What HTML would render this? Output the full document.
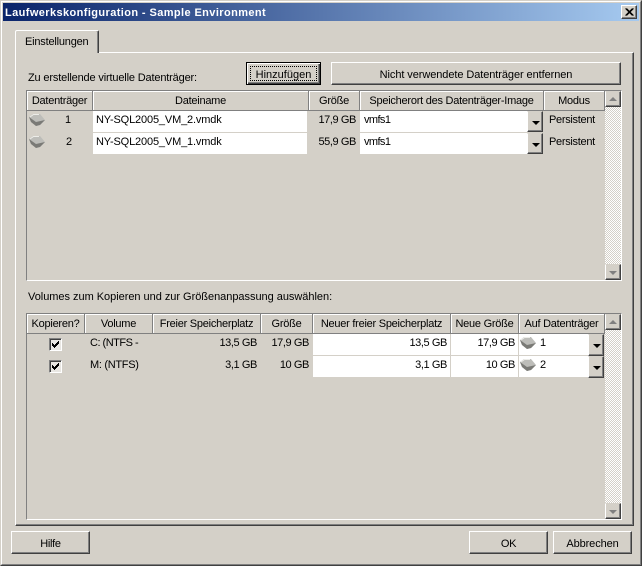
<!DOCTYPE html>
<html><head><meta charset="utf-8"><style>
html,body{margin:0;padding:0}
body{width:642px;height:566px;overflow:hidden;position:relative;background:#d4d0c8;font-family:"Liberation Sans",sans-serif;font-size:11px;color:#000}
div{position:absolute;box-sizing:border-box}
.t{white-space:nowrap;height:14px;line-height:14px;letter-spacing:-.2px;transform:translateY(1px)}
.c{text-align:center}.r{text-align:right}
.n{letter-spacing:-.4px}
.b{background:#d4d0c8;border:1px solid;border-color:#fff #404040 #404040 #fff;box-shadow:inset -1px -1px 0 #808080;text-align:center;white-space:nowrap}
.h{background:#d4d0c8;border-right:1px solid #808080;border-bottom:1px solid #808080;box-shadow:inset 1px 1px 0 #fff;text-align:center;line-height:21px;height:20px;white-space:nowrap;letter-spacing:-.25px}
.w{background:#fff}
.dd{width:16px;background:#d4d0c8;border:1px solid;border-color:#d4d0c8 #404040 #404040 #fff;box-shadow:inset -1px -1px 0 #808080}
.dd:after{content:"";position:absolute;left:4px;top:9px;border:4px solid transparent;border-top:4px solid #000;border-bottom:0}
.sb{width:16px;height:16px;background:#d4d0c8;border:1px solid;border-color:#d4d0c8 #404040 #404040 #fff;box-shadow:inset -1px -1px 0 #808080}
.up:after{content:"";position:absolute;left:3px;top:5px;border:4px solid transparent;border-bottom:4px solid #808080;border-top:0}
.dn:after{content:"";position:absolute;left:3px;top:6px;border:4px solid transparent;border-top:4px solid #808080;border-bottom:0}
.tr{width:16px;background:conic-gradient(#fff 25%,#d4d0c8 0 50%,#fff 0 75%,#d4d0c8 0) 0 0/2px 2px}
.cb{width:13px;height:13px;background:#e8e6e2;border:1px solid;border-color:#808080 #fff #fff #808080;box-shadow:inset 1px 1px 0 #404040}
svg{position:absolute;display:block}
</style></head><body>
<!-- window frame -->
<div style="left:0;top:0;width:642px;height:566px;border:1px solid;border-color:#d4d0c8 #404040 #404040 #d4d0c8"></div>
<div style="left:1px;top:1px;width:640px;height:564px;border:1px solid;border-color:#fff #808080 #808080 #fff"></div>
<!-- title -->
<div style="left:3px;top:3px;width:636px;height:18px;background:linear-gradient(90deg,#0a246a,#a6caf0)"></div>
<div class="t" style="left:5px;top:5px;color:#fff;font-weight:bold;letter-spacing:.4px">Laufwerkskonfiguration - Sample Environment</div>
<div style="left:621px;top:5px;width:16px;height:14px;background:#d4d0c8;border:1px solid;border-color:#fff #404040 #404040 #fff;box-shadow:inset -1px -1px 0 #808080"></div>
<svg style="left:621px;top:5px" width="16" height="14"><path d="M4.5 3.5L11.5 10.5M5.5 3.5L12.5 10.5M11.5 3.5L4.5 10.5M12.5 3.5L5.5 10.5" stroke="#000" stroke-width="1"/></svg>
<!-- panel -->
<div style="left:15px;top:52px;width:619px;height:474px;border:1px solid;border-color:#fff #404040 #404040 #fff;box-shadow:inset -1px -1px 0 #808080"></div>
<!-- tab -->
<div style="left:15px;top:30px;width:84px;height:23px;background:#d4d0c8;border:1px solid;border-color:#fff #404040 #d4d0c8 #fff;border-bottom:0;border-top-left-radius:2px;border-top-right-radius:2px;box-shadow:inset -1px 0 0 #808080"></div>
<div class="t" style="left:25px;top:34px;letter-spacing:-.2px">Einstellungen</div>

<div class="t" style="left:28px;top:70px;letter-spacing:-.16px">Zu erstellende virtuelle Datenträger:</div>
<div class="b" style="left:246px;top:62px;width:75px;height:23px;border:1px solid #000;box-shadow:inset 1px 1px 0 #fff,inset -1px -1px 0 #404040,inset -2px -2px 0 #808080;line-height:24px">Hinzufügen</div>
<div style="left:250px;top:66px;width:67px;height:15px;border:1px dotted #000"></div>
<div class="b" style="left:331px;top:62px;width:290px;height:23px;line-height:24px;letter-spacing:-.08px">Nicht verwendete Datenträger entfernen</div>

<!-- table 1 -->
<div style="left:26px;top:90px;width:596px;height:191px;border:1px solid;border-color:#808080 #fff #fff #808080"></div>
<div class="h" style="left:27px;top:91px;width:66px">Datenträger</div>
<div class="h" style="left:93px;top:91px;width:216px">Dateiname</div>
<div class="h" style="left:309px;top:91px;width:51px">Größe</div>
<div class="h" style="left:360px;top:91px;width:184px">Speicherort des Datenträger-Image</div>
<div class="h" style="left:544px;top:91px;width:61px">Modus</div>
<div class="tr" style="left:605px;top:91px;height:189px"></div>
<div class="sb up" style="left:605px;top:91px"></div>
<div class="sb dn" style="left:605px;top:264px"></div>

<svg style="left:28px;top:113px" width="18" height="14"><path d="M1 4L5 1H12L17 7L12 12L8 13L3 9Z" fill="#bdbdb9"/><path d="M1 4L8 9L17 7L12 12L8 13L3 9Z" fill="#7a7a76"/><path d="M2 4L5.5 1.5H11" fill="none" stroke="#ecece8"/></svg>
<div class="t c" style="left:60px;top:112px;width:16px">1</div>
<div class="w" style="left:93px;top:111px;width:214px;height:21px"></div>
<div class="t" style="left:96px;top:112px;letter-spacing:-.15px">NY-SQL2005_VM_2.vmdk</div>
<div class="t r n" style="left:309px;top:112px;width:47px">17,9 GB</div>
<div class="w" style="left:360px;top:111px;width:167px;height:21px"></div>
<div class="t" style="left:364px;top:112px;letter-spacing:-.6px">vmfs1</div>
<div class="dd" style="left:527px;top:111px;height:21px"></div>
<div class="t" style="left:549px;top:112px;letter-spacing:-.3px">Persistent</div>

<svg style="left:28px;top:135px" width="18" height="14"><path d="M1 4L5 1H12L17 7L12 12L8 13L3 9Z" fill="#bdbdb9"/><path d="M1 4L8 9L17 7L12 12L8 13L3 9Z" fill="#7a7a76"/><path d="M2 4L5.5 1.5H11" fill="none" stroke="#ecece8"/></svg>
<div class="t c" style="left:61px;top:134px;width:16px">2</div>
<div class="w" style="left:93px;top:133px;width:214px;height:21px"></div>
<div class="t" style="left:96px;top:134px;letter-spacing:-.15px">NY-SQL2005_VM_1.vmdk</div>
<div class="t r n" style="left:309px;top:134px;width:47px">55,9 GB</div>
<div class="w" style="left:360px;top:133px;width:167px;height:21px"></div>
<div class="t" style="left:364px;top:134px;letter-spacing:-.6px">vmfs1</div>
<div class="dd" style="left:527px;top:133px;height:21px"></div>
<div class="t" style="left:549px;top:134px;letter-spacing:-.3px">Persistent</div>

<div class="t" style="left:28px;top:289px;letter-spacing:-.03px">Volumes zum Kopieren und zur Größenanpassung auswählen:</div>

<!-- table 2 -->
<div style="left:26px;top:313px;width:596px;height:207px;border:1px solid;border-color:#808080 #fff #fff #808080"></div>
<div class="h" style="left:27px;top:314px;width:58px">Kopieren?</div>
<div class="h" style="left:85px;top:314px;width:68px">Volume</div>
<div class="h" style="left:153px;top:314px;width:108px">Freier Speicherplatz</div>
<div class="h" style="left:261px;top:314px;width:52px">Größe</div>
<div class="h" style="left:313px;top:314px;width:138px">Neuer freier Speicherplatz</div>
<div class="h" style="left:451px;top:314px;width:68px">Neue Größe</div>
<div class="h" style="left:519px;top:314px;width:86px">Auf Datenträger</div>
<div class="tr" style="left:605px;top:314px;height:205px"></div>
<div class="sb up" style="left:605px;top:314px"></div>
<div class="sb dn" style="left:605px;top:503px"></div>

<div class="cb" style="left:49px;top:338px"></div>
<svg style="left:49px;top:338px" width="13" height="13" shape-rendering="crispEdges"><path d="M3 5h1v3H3zM4 6h1v3H4zM5 7h1v3H5zM6 6h1v3H6zM7 5h1v3H7zM8 4h1v3H8zM9 3h1v3H9z" fill="#000"/></svg>
<div class="t" style="left:90px;top:335px;letter-spacing:-.5px">C: (NTFS -</div>
<div class="t r n" style="left:153px;top:335px;width:104px">13,5 GB</div>
<div class="t r n" style="left:261px;top:335px;width:48px">17,9 GB</div>
<div class="w" style="left:313px;top:334px;width:137px;height:21px"></div>
<div class="t r n" style="left:313px;top:335px;width:134px">13,5 GB</div>
<div class="w" style="left:451px;top:334px;width:67px;height:21px"></div>
<div class="t r n" style="left:451px;top:335px;width:64px">17,9 GB</div>
<div class="w" style="left:519px;top:334px;width:69px;height:21px"></div>
<svg style="left:519px;top:336px" width="18" height="14"><path d="M1 4L5 1H12L17 7L12 12L8 13L3 9Z" fill="#bdbdb9"/><path d="M1 4L8 9L17 7L12 12L8 13L3 9Z" fill="#7a7a76"/><path d="M2 4L5.5 1.5H11" fill="none" stroke="#ecece8"/></svg>
<div class="t" style="left:540px;top:335px">1</div>
<div class="dd" style="left:588px;top:334px;height:22px"></div>

<div class="cb" style="left:49px;top:360px"></div>
<svg style="left:49px;top:360px" width="13" height="13" shape-rendering="crispEdges"><path d="M3 5h1v3H3zM4 6h1v3H4zM5 7h1v3H5zM6 6h1v3H6zM7 5h1v3H7zM8 4h1v3H8zM9 3h1v3H9z" fill="#000"/></svg>
<div class="t" style="left:90px;top:357px;letter-spacing:-.3px">M: (NTFS)</div>
<div class="t r n" style="left:153px;top:357px;width:104px">3,1 GB</div>
<div class="t r n" style="left:261px;top:357px;width:48px">10 GB</div>
<div class="w" style="left:313px;top:356px;width:137px;height:21px"></div>
<div class="t r n" style="left:313px;top:357px;width:134px">3,1 GB</div>
<div class="w" style="left:451px;top:356px;width:67px;height:21px"></div>
<div class="t r n" style="left:451px;top:357px;width:64px">10 GB</div>
<div class="w" style="left:519px;top:356px;width:69px;height:21px"></div>
<svg style="left:519px;top:358px" width="18" height="14"><path d="M1 4L5 1H12L17 7L12 12L8 13L3 9Z" fill="#bdbdb9"/><path d="M1 4L8 9L17 7L12 12L8 13L3 9Z" fill="#7a7a76"/><path d="M2 4L5.5 1.5H11" fill="none" stroke="#ecece8"/></svg>
<div class="t" style="left:540px;top:357px">2</div>
<div class="dd" style="left:588px;top:356px;height:22px"></div>

<!-- bottom buttons -->
<div class="b" style="left:11px;top:531px;width:79px;height:23px;line-height:24px;letter-spacing:-.3px">Hilfe</div>
<div class="b" style="left:469px;top:531px;width:79px;height:23px;line-height:24px;letter-spacing:-.3px">OK</div>
<div class="b" style="left:553px;top:531px;width:79px;height:23px;line-height:24px;letter-spacing:-.1px">Abbrechen</div>
</body></html>
